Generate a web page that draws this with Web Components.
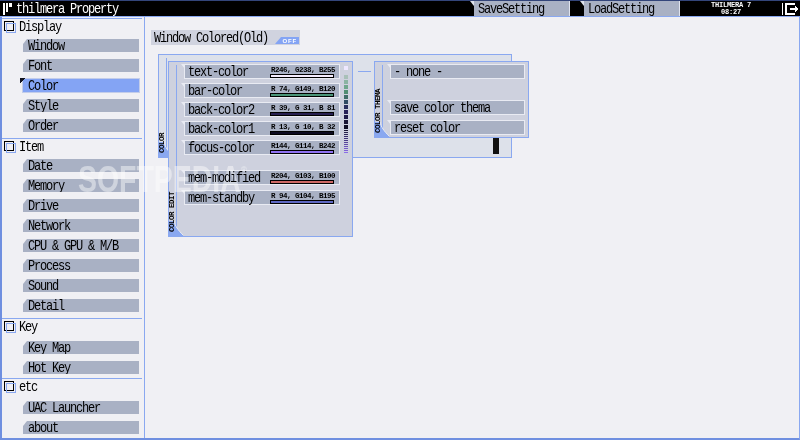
<!DOCTYPE html>
<html>
<head>
<meta charset="utf-8">
<style>
  html, body { margin: 0; height: 100%; }
  body {
    width: 800px;
    height: 440px;
    overflow: hidden;
    background: #000;
    font: 12px/14px "Liberation Mono", monospace;
    letter-spacing: -1.2px;
    color: #000;
  }
</style>
</head>
<body>
<prop-window>
  <title-bar slot="top"></title-bar>
  <side-bar slot="side">
    <nav-group label="Display">
      <nav-item>Window</nav-item>
      <nav-item>Font</nav-item>
      <nav-item selected>Color</nav-item>
      <nav-item>Style</nav-item>
      <nav-item>Order</nav-item>
    </nav-group>
    <nav-group label="Item">
      <nav-item>Date</nav-item>
      <nav-item>Memory</nav-item>
      <nav-item>Drive</nav-item>
      <nav-item>Network</nav-item>
      <nav-item>CPU &amp; GPU &amp; M/B</nav-item>
      <nav-item>Process</nav-item>
      <nav-item>Sound</nav-item>
      <nav-item>Detail</nav-item>
    </nav-group>
    <nav-group label="Key" compact>
      <nav-item>Key Map</nav-item>
      <nav-item>Hot Key</nav-item>
    </nav-group>
    <nav-group label="etc" compact>
      <nav-item>UAC Launcher</nav-item>
      <nav-item>about</nav-item>
    </nav-group>
  </side-bar>
  <color-canvas slot="main"></color-canvas>
</prop-window>
<soft-mark></soft-mark>

<script>
  // the app's bitmap font is taller than Liberation Mono at this width
  const TALL = `.t { display: inline-block; white-space: pre; transform: scaleY(1.2); }`;

  class PropWindow extends HTMLElement {
    constructor() {
      super();
      var shadow = this.attachShadow({ mode: "open" });
      shadow.innerHTML = `
        <style>
        :host { display: block; width: 800px; height: 440px; box-sizing: border-box; }
        .frame {
          display: grid;
          grid-template-rows: 17px 1fr;
          height: 440px;
          box-sizing: border-box;
        }
        .body {
          display: flex;
          background: #f0f0f4;
          border-left: 2px solid #6f8fe0;
          border-right: 1px solid #8aa8f0;
          border-bottom: 2px solid #6f8fe0;
          min-height: 0;
        }
        </style>
        <div class="frame">
          <slot name="top"></slot>
          <div class="body">
            <slot name="side"></slot>
            <slot name="main"></slot>
          </div>
        </div>
      `;
    }
  }

  class TitleBar extends HTMLElement {
    constructor() {
      super();
      var shadow = this.attachShadow({ mode: "open" });
      shadow.innerHTML = `
        <style>
        ${TALL}
        :host {
          display: flex;
          align-items: stretch;
          height: 17px;
          box-sizing: border-box;
          background: #000;
          border-top: 1px solid #33457a;
          border-bottom: 1px solid #8aa8f0;
          color: #fff;
        }
        .logo { display: block; margin: 2px 0 0 3px; }
        .name { margin-left: 4px; line-height: 16px; flex: none; width: 458px; }
        .tab {
          position: relative;
          width: 96px;
          box-sizing: border-box;
          background: #a9b1c4;
          border-right: 1px solid #dfe3ee;
          color: #000;
          padding-left: 4px;
          line-height: 16px;
        }
        .tab::before {
          content: "";
          position: absolute;
          left: -4px;
          top: 0;
          width: 4px;
          height: 5px;
          background: #dfe3ee;
          clip-path: polygon(0 0, 100% 0, 100% 100%);
        }
        .tab + .tab { margin-left: 14px; }
        .clock {
          width: 102px;
          flex: none;
          text-align: center;
          font: bold 7px/7px "Liberation Mono", monospace;
          letter-spacing: -.2px;
          padding-top: 1px;
        }
        .exit { display: block; margin: 1px 0 0 0; }
        </style>
        <svg class="logo" width="9" height="12" viewBox="0 0 9 12" shape-rendering="crispEdges">
          <path fill="#fff" d="M0 0h2v12H0zM3 0h2v9H3zM6 0h3v4H6z"/>
        </svg>
        <span class="name"><span class="t">thilmera Property</span></span>
        <span class="tab"><span class="t">SaveSetting</span></span>
        <span class="tab"><span class="t">LoadSetting</span></span>
        <div class="clock">THILMERA 7<br>08:27</div>
        <svg class="exit" width="17" height="14" viewBox="0 0 17 14" shape-rendering="crispEdges">
          <path fill="#fff" d="M0 1h1v12H0z"/>
          <path fill="#fff" d="M3 1h10v2H5v8h8v2H3zM11 6h2V4h1v1h1v1h1v2h-1v1h-1v1h-1V8h-2H8V6z"/>
        </svg>
      `;
    }
  }

  class SideBar extends HTMLElement {
    constructor() {
      super();
      var shadow = this.attachShadow({ mode: "open" });
      shadow.innerHTML = `
        <style>
        :host {
          display: block;
          flex: none;
          width: 143px;
          box-sizing: border-box;
          border-right: 1px solid #8aa8f0;
          padding-top: 1px;
        }
        </style>
        <slot></slot>
      `;
    }
  }

  class NavGroup extends HTMLElement {
    constructor() {
      super();
      var shadow = this.attachShadow({ mode: "open" });
      shadow.innerHTML = `
        <style>
        ${TALL}
        :host {
          display: block;
          width: 140px;
          box-sizing: border-box;
          border-top: 1px solid #8aa8f0;
          height: 120px;
        }
        :host([compact]) { height: 60px; }
        :host(:nth-of-type(2)) { height: 180px; }
        .head {
          display: flex;
          gap: 5px;
          height: 20px;
          padding: 2px 0 0 2px;
          box-sizing: border-box;
        }
        :host([compact]) .head { height: 22px; }
        .check {
          position: relative;
          width: 10px;
          height: 10px;
          box-sizing: border-box;
          border: 1px solid #000;
          margin-top: 0;
        }
        .check::after {
          content: "";
          position: absolute;
          left: 1px;
          top: 1px;
          width: 8px;
          height: 8px;
          border: 1px solid #8aa8f0;
        }
        .list { display: flex; flex-direction: column; gap: 7px; padding-left: 21px; }
        </style>
        <div class="head"><span class="check"></span><span class="label t"></span></div>
        <div class="list"><slot></slot></div>
      `;
      shadow.querySelector(".label").textContent = this.getAttribute("label");
    }
  }

  class NavItem extends HTMLElement {
    constructor() {
      super();
      var shadow = this.attachShadow({ mode: "open" });
      shadow.innerHTML = `
        <style>
        ${TALL}
        :host { display: block; position: relative; width: 116px; height: 13px; }
        .box {
          height: 13px;
          line-height: 15px;
          padding-left: 5px;
          background: #a9b1c4;
          clip-path: polygon(4px 0, 100% 0, 100% 100%, 0 100%, 0 5px);
        }
        :host([selected]) .box {
          clip-path: none;
          background: #84a4f4;
          outline: 1px solid #c3cdea;
        }
        .flag { display: none; position: absolute; left: -3px; top: -1px; }
        :host([selected]) .flag { display: block; }
        </style>
        <div class="box"><span class="t"><slot></slot></span></div>
        <svg class="flag" width="7" height="6" viewBox="0 0 7 6" shape-rendering="crispEdges">
          <path fill="#12131f" d="M0 0h6L0 5z"/>
        </svg>
      `;
    }
  }

  class ColorRow extends HTMLElement {
    constructor() {
      super();
      var shadow = this.attachShadow({ mode: "open" });
      shadow.innerHTML = `
        <style>
        ${TALL}
        :host {
          display: block;
          position: relative;
          width: 156px;
          height: 15px;
          box-sizing: border-box;
          border: 1px solid #e9ebf3;
          background: #a9b1c4;
        }
        :host::before {
          content: "";
          position: absolute;
          left: -4px;
          top: -1px;
          width: 4px;
          height: 5px;
          background: #e9ebf3;
          clip-path: polygon(0 0, 100% 0, 100% 100%);
        }
        .wrap { display: flex; height: 13px; padding-left: 3px; }
        .name { width: 82px; flex: none; line-height: 15px; }
        .val { width: 64px; flex: none; }
        .num {
          display: block;
          font: bold 7.5px/10px "Liberation Mono", monospace;
          letter-spacing: -.5px;
          white-space: pre;
          height: 9px;
          padding-left: 1px;
        }
        .bar {
          display: block;
          height: 2px;
          border: 1px solid #000;
          background: var(--c, #000);
        }
        </style>
        <div class="wrap">
          <span class="name"><span class="t"><slot></slot></span></span>
          <span class="val"><span class="num"></span><span class="bar"></span></span>
        </div>
      `;
      shadow.querySelector(".num").textContent = this.getAttribute("value");
      shadow.querySelector(".bar").style.setProperty("--c", this.getAttribute("color"));
    }
  }

  class ThemaRow extends HTMLElement {
    constructor() {
      super();
      var shadow = this.attachShadow({ mode: "open" });
      shadow.innerHTML = `
        <style>
        ${TALL}
        :host {
          display: block;
          position: relative;
          width: 135px;
          height: 15px;
          box-sizing: border-box;
          border: 1px solid #e9ebf3;
          background: #a9b1c4;
          padding-left: 3px;
          line-height: 15px;
        }
        :host::before {
          content: "";
          position: absolute;
          left: -4px;
          top: -1px;
          width: 4px;
          height: 5px;
          background: #e9ebf3;
          clip-path: polygon(0 0, 100% 0, 100% 100%);
        }
        </style>
        <span class="t"><slot></slot></span>
      `;
    }
  }

  class SidePanel extends HTMLElement {
    constructor() {
      super();
      var shadow = this.attachShadow({ mode: "open" });
      shadow.innerHTML = `
        <style>
        :host {
          display: block;
          position: absolute;
          box-sizing: border-box;
          border: 1px solid #8aa8f0;
          background: var(--bg, #ced1de);
        }
        .rule {
          position: absolute;
          left: 7px;
          top: 3px;
          bottom: 0;
          width: 1px;
          background: #8aa8f0;
        }
        .tag {
          position: absolute;
          left: 0;
          bottom: 4px;
          width: 7px;
          writing-mode: vertical-rl;
          transform: rotate(180deg);
          font: bold 7.5px/7px "Liberation Mono", monospace;
          letter-spacing: -.5px;
          white-space: nowrap;
        }
        .corner { position: absolute; left: 0; bottom: 0; }
        </style>
        <div class="rule"></div>
        <svg class="corner" width="15" height="15" viewBox="0 0 15 15">
          <path fill="#8aa8f0" d="M0 0h5c1 5 4 9 9 14v1H0z"/>
          <path fill="none" stroke="#e9ebf3" d="M5 0c1 5 4 9 9 14"/>
        </svg>
        <div class="tag"></div>
        <slot></slot>
      `;
      shadow.querySelector(".tag").textContent = this.getAttribute("tag");
    }
  }

  class ColorCanvas extends HTMLElement {
    constructor() {
      super();
      var shadow = this.attachShadow({ mode: "open" });
      var chips = ["#a8c0b8", "#8ab4a2", "#6fa78c", "#4f8c72", "#3f6c68", "#2f4a62", "#2a2f5e",
        "#261f56", "#1f1a48", "#181434", "#100e24"];
      var stripes = ["#1c1838", "#241f48", "#2c2558", "#352b68", "#3f3278", "#4a3a88", "#554298", "#604aa8", "#6b52b8", "#765ac8", "#8062d8", "#8a6ee8"];
      shadow.innerHTML = `
        <style>
        ${TALL}
        :host { display: block; position: relative; flex: 1; min-width: 0; }
        .title {
          position: absolute;
          left: 6px;
          top: 13px;
          width: 149px;
          height: 15px;
          background: #d0d3df;
          padding-left: 3px;
          line-height: 16px;
          box-sizing: border-box;
        }
        .off {
          position: absolute;
          left: 130px;
          top: 20px;
          width: 24px;
          height: 7px;
          background: #84a4f4;
          clip-path: polygon(6px 0, 100% 0, 100% 100%, 0 100%);
          color: #fff;
          font: bold 6px/8px "Liberation Sans", sans-serif;
          letter-spacing: .8px;
          text-align: right;
          padding-right: 2px;
          box-sizing: border-box;
        }
        .outer { --bg: #dde1ea; left: 13px; top: 37px; width: 354px; height: 104px; }
        .edit { left: 23px; top: 44px; width: 185px; height: 176px; }
        .thema { left: 229px; top: 44px; width: 155px; height: 77px; }
        .rows { position: absolute; left: 15px; top: 2px; display: flex; flex-direction: column; gap: 4px; }
        .rows .gap { height: 7px; }
        .rows .last { margin-top: 1px; }
        .chips {
          position: absolute;
          left: 175px;
          top: 4px;
          display: flex;
          flex-direction: column;
          width: 4px;
        }
        .chips i { display: block; height: 4px; margin-bottom: 1px; }
        .chips i.top { background: #eee8ff; margin-bottom: 5px; }
        .chips i.line { height: 1px; margin-bottom: 1px; }
        .link { position: absolute; left: 213px; top: 54px; width: 13px; height: 1px; background: #8aa8f0; }
        .block { position: absolute; left: 348px; top: 120px; width: 6px; height: 17px; background: #111; }
        .trows { position: absolute; left: 15px; top: 2px; display: flex; flex-direction: column; }
        </style>
        <div class="title"><span class="t">Window Colored(Old)</span></div>
        <div class="off">OFF</div>
        <side-panel class="outer" tag="COLOR"></side-panel>
        <div class="block"></div>
        <div class="link"></div>
        <side-panel class="edit" tag="COLOR EDIT">
          <div class="rows">
            <color-row value="R246, G238, B255" color="#f6eeff">text-color</color-row>
            <color-row value="R 74, G149, B120" color="#4a9578">bar-color</color-row>
            <color-row value="R 39, G 31, B 81" color="#271f51">back-color2</color-row>
            <color-row value="R 13, G 10, B 32" color="#0d0a20">back-color1</color-row>
            <color-row value="R144, G114, B242" color="#9072f2">focus-color</color-row>
            <div class="gap"></div>
            <color-row value="R204, G103, B100" color="#cc6764">mem-modified</color-row>
            <color-row class="last" value="R 94, G104, B195" color="#5e68c3">mem-standby</color-row>
          </div>
          <div class="chips">
            <i class="top"></i>
            ${chips.map((c) => `<i style="background:${c}"></i>`).join("")}
            ${stripes.map((c) => `<i class="line" style="background:${c}"></i>`).join("")}
          </div>
        </side-panel>
        <side-panel class="thema" tag="COLOR THEMA">
          <div class="trows">
            <thema-row>- none -</thema-row>
            <thema-row style="margin-top:21px">save color thema</thema-row>
            <thema-row style="margin-top:5px">reset color</thema-row>
          </div>
        </side-panel>
      `;
    }
  }

  class SoftMark extends HTMLElement {
    constructor() {
      super();
      var shadow = this.attachShadow({ mode: "open" });
      shadow.innerHTML = `
        <style>
        :host {
          position: absolute;
          left: 78px;
          top: 160px;
          font: bold 36px/40px "Liberation Sans", sans-serif;
          letter-spacing: 0;
          color: rgba(255, 255, 255, .45);
          mix-blend-mode: overlay;
          white-space: nowrap;
          pointer-events: none;
          transform: scaleX(.79);
          transform-origin: left top;
          filter: blur(.5px);
        }
        sup { font-size: 11px; font-weight: normal; vertical-align: 18px; line-height: 0; }
        </style>
        SOFTPEDIA<sup>®</sup>
      `;
    }
  }

  customElements.define("prop-window", PropWindow);
  customElements.define("title-bar", TitleBar);
  customElements.define("side-bar", SideBar);
  customElements.define("nav-group", NavGroup);
  customElements.define("nav-item", NavItem);
  customElements.define("color-row", ColorRow);
  customElements.define("thema-row", ThemaRow);
  customElements.define("side-panel", SidePanel);
  customElements.define("color-canvas", ColorCanvas);
  customElements.define("soft-mark", SoftMark);
</script>
</body>
</html>
